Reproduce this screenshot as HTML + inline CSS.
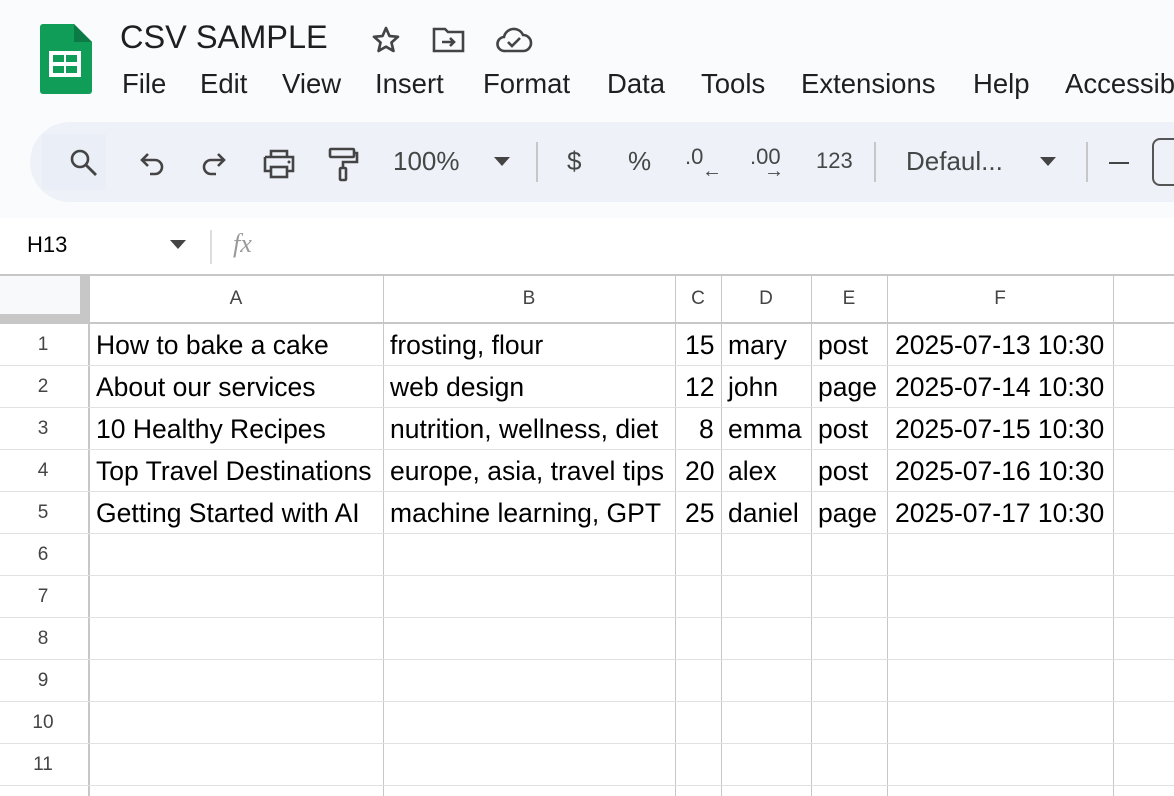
<!DOCTYPE html>
<html><head><style>
*{margin:0;padding:0;box-sizing:border-box}
body{width:1174px;height:796px;overflow:hidden;background:#fff;font-family:"Liberation Sans",Arial,sans-serif;position:relative}
.top{position:absolute;left:0;top:0;width:1174px;height:218px;background:#f9fbfd}
.abs{position:absolute}
.title{left:120px;top:19px;font-size:32.5px;color:#1f1f1f}
.menu{top:68px;font-size:27.5px;color:#1f1f1f}
.tb{left:30px;top:122px;width:1200px;height:80px;border-radius:40px;background:#eef2f8}
.ti{font-size:26px;color:#444746;top:146px}
.sep{width:2px;background:#c7c7c7;top:142px;height:40px}
.hl{position:absolute;background:#e1e1e1;height:1px}
.vl{position:absolute;background:#e1e1e1;width:1px}
.cell{position:absolute;font-size:26.5px;color:#000;white-space:nowrap}
.rn{position:absolute;width:86px;text-align:center;font-size:19px;color:#444}
.ch{position:absolute;text-align:center;font-size:19px;color:#444;top:288px}
</style></head><body>
<div class="top"></div>
<svg class="abs" style="left:40px;top:24px" width="52" height="70" viewBox="0 0 52 70"><path d="M3 0h31l18 18v49a3 3 0 0 1-3 3H3a3 3 0 0 1-3-3V3a3 3 0 0 1 3-3z" fill="#0f9d58"/><path d="M34 0v18h18z" fill="#0b7a44"/><rect x="9" y="27" width="32" height="26" fill="#fff"/><rect x="13" y="31" width="11" height="7" fill="#0f9d58"/><rect x="26" y="31" width="11" height="7" fill="#0f9d58"/><rect x="13" y="42" width="11" height="7" fill="#0f9d58"/><rect x="26" y="42" width="11" height="7" fill="#0f9d58"/></svg>
<div class="abs title">CSV SAMPLE</div>
<svg class="abs" style="left:370px;top:24px" width="32" height="32" viewBox="0 0 24 24"><path d="M12 3l2.6 6 6.4.6-4.9 4.3 1.5 6.3L12 17l-5.6 3.2 1.5-6.3L3 9.6 9.4 9z" fill="none" stroke="#444" stroke-width="2" stroke-linejoin="round"/></svg>
<svg class="abs" style="left:432px;top:26px" width="34" height="28" viewBox="0 0 34 28"><path d="M2 3h11l3 3h15v19H2z" fill="none" stroke="#444" stroke-width="2.6"/><path d="M10 16h12m-4-4l4 4-4 4" fill="none" stroke="#444" stroke-width="2.6"/></svg>
<svg class="abs" style="left:495px;top:26px" width="38" height="28" viewBox="0 0 38 28"><path d="M10 25a7 7 0 0 1-1-14A10 10 0 0 1 28 9a8 8 0 0 1 0 16z" fill="none" stroke="#444" stroke-width="2.6"/><path d="M13 16l4 4 8-8" fill="none" stroke="#444" stroke-width="2.6"/></svg>
<div class="abs menu" style="left:122px">File</div>
<div class="abs menu" style="left:200px">Edit</div>
<div class="abs menu" style="left:282px">View</div>
<div class="abs menu" style="left:375px">Insert</div>
<div class="abs menu" style="left:483px">Format</div>
<div class="abs menu" style="left:607px">Data</div>
<div class="abs menu" style="left:701px">Tools</div>
<div class="abs menu" style="left:801px">Extensions</div>
<div class="abs menu" style="left:973px">Help</div>
<div class="abs menu" style="left:1065px">Accessibility</div>
<div class="abs tb"></div>
<div class="abs" style="left:42px;top:134px;width:64px;height:56px;background:#e9eef7"></div>
<svg class="abs" style="left:68px;top:147px" width="32" height="32" viewBox="0 0 32 32"><circle cx="12" cy="12" r="8" fill="none" stroke="#444" stroke-width="2.6"/><path d="M18 18l10 10" stroke="#444" stroke-width="2.8"/></svg>
<svg class="abs" style="left:138px;top:150px" width="28" height="28" viewBox="0 0 28 28"><path d="M10 4L4 10l6 6M4 10h13a7 7 0 0 1 0 14h-5" fill="none" stroke="#444" stroke-width="2.6"/></svg>
<svg class="abs" style="left:200px;top:150px" width="28" height="28" viewBox="0 0 28 28"><path d="M18 4l6 6-6 6M24 10H11a7 7 0 0 0 0 14h5" fill="none" stroke="#444" stroke-width="2.6"/></svg>
<svg class="abs" style="left:262px;top:148px" width="34" height="32" viewBox="0 0 34 32"><path d="M9 9V3h16v6M3 9h28v14h-6M9 23H3V9" fill="none" stroke="#444" stroke-width="2.6"/><rect x="9" y="19" width="16" height="10" fill="none" stroke="#444" stroke-width="2.6"/><circle cx="27" cy="14" r="1.5" fill="#444"/></svg>
<svg class="abs" style="left:326px;top:146px" width="34" height="36" viewBox="0 0 34 36"><rect x="4" y="3" width="24" height="8" rx="1" fill="none" stroke="#444" stroke-width="2.6"/><path d="M28 7h3v9H17v6" fill="none" stroke="#444" stroke-width="2.6"/><rect x="14" y="22" width="6" height="12" rx="1" fill="none" stroke="#444" stroke-width="2.6"/></svg>
<div class="abs ti" style="left:393px">100%</div>
<svg class="abs" style="left:494px;top:157px" width="16" height="10"><path d="M0 0h16L8 9z" fill="#444"/></svg>
<div class="abs sep" style="left:536px"></div>
<div class="abs ti" style="left:567px">$</div>
<div class="abs ti" style="left:628px">%</div>
<div class="abs ti" style="left:685px;font-size:22px;top:144px">.0</div>
<div class="abs" style="left:702px;top:160px;font-size:20px;color:#444">←</div>
<div class="abs ti" style="left:750px;font-size:22px;top:144px">.00</div>
<div class="abs" style="left:764px;top:160px;font-size:20px;color:#444">→</div>
<div class="abs ti" style="left:816px;font-size:22px;top:148px">123</div>
<div class="abs sep" style="left:874px"></div>
<div class="abs ti" style="left:906px">Defaul...</div>
<svg class="abs" style="left:1040px;top:157px" width="16" height="10"><path d="M0 0h16L8 9z" fill="#444"/></svg>
<div class="abs sep" style="left:1086px"></div>
<div class="abs" style="left:1109px;top:162px;width:20px;height:2px;background:#444"></div>
<div class="abs" style="left:1152px;top:138px;width:40px;height:48px;border:2px solid #555;border-radius:8px"></div>
<div class="abs" style="left:27px;top:232px;font-size:22px;color:#000">H13</div>
<svg class="abs" style="left:170px;top:240px" width="16" height="10"><path d="M0 0h16L8 9z" fill="#444"/></svg>
<div class="abs" style="left:210px;top:230px;width:2px;height:34px;background:#ddd"></div>
<div class="abs" style="left:233px;top:229px;font-size:26px;color:#999;font-style:italic;font-family:'Liberation Serif',serif">fx</div>
<div class="abs" style="left:0;top:274px;width:1174px;height:2px;background:#c7c7c7"></div>
<div class="abs" style="left:0;top:276px;width:89px;height:47px;background:#f8f9fa"></div>
<div class="abs" style="left:80px;top:276px;width:9px;height:47px;background:#c7c7c7"></div>
<div class="abs" style="left:0;top:314px;width:89px;height:9px;background:#c7c7c7"></div>
<div class="abs" style="left:0;top:322px;width:1174px;height:2px;background:#c7c7c7"></div>
<div class="abs" style="left:88px;top:276px;width:2px;height:520px;background:#c7c7c7"></div>
<div class="vl" style="left:383px;top:276px;height:520px;background:#c7c7c7"></div>
<div class="vl" style="left:675px;top:276px;height:520px;background:#c7c7c7"></div>
<div class="vl" style="left:721px;top:276px;height:520px;background:#c7c7c7"></div>
<div class="vl" style="left:811px;top:276px;height:520px;background:#c7c7c7"></div>
<div class="vl" style="left:887px;top:276px;height:520px;background:#c7c7c7"></div>
<div class="vl" style="left:1113px;top:276px;height:520px;background:#c7c7c7"></div>
<div class="ch" style="left:89px;width:294px">A</div>
<div class="ch" style="left:383px;width:292px">B</div>
<div class="ch" style="left:675px;width:46px">C</div>
<div class="ch" style="left:721px;width:90px">D</div>
<div class="ch" style="left:811px;width:76px">E</div>
<div class="ch" style="left:887px;width:226px">F</div>
<div class="hl" style="left:0;top:365px;width:1174px"></div>
<div class="hl" style="left:0;top:407px;width:1174px"></div>
<div class="hl" style="left:0;top:449px;width:1174px"></div>
<div class="hl" style="left:0;top:491px;width:1174px"></div>
<div class="hl" style="left:0;top:533px;width:1174px"></div>
<div class="hl" style="left:0;top:575px;width:1174px"></div>
<div class="hl" style="left:0;top:617px;width:1174px"></div>
<div class="hl" style="left:0;top:659px;width:1174px"></div>
<div class="hl" style="left:0;top:701px;width:1174px"></div>
<div class="hl" style="left:0;top:743px;width:1174px"></div>
<div class="hl" style="left:0;top:785px;width:1174px"></div>
<div class="rn" style="top:334px">1</div>
<div class="rn" style="top:376px">2</div>
<div class="rn" style="top:418px">3</div>
<div class="rn" style="top:460px">4</div>
<div class="rn" style="top:502px">5</div>
<div class="rn" style="top:544px">6</div>
<div class="rn" style="top:586px">7</div>
<div class="rn" style="top:628px">8</div>
<div class="rn" style="top:670px">9</div>
<div class="rn" style="top:712px">10</div>
<div class="rn" style="top:754px">11</div>
<div class="cell" style="left:96px;top:330px">How to bake a cake</div>
<div class="cell" style="left:390px;top:330px">frosting, flour</div>
<div class="cell" style="left:685px;top:330px">15</div>
<div class="cell" style="left:728px;top:330px">mary</div>
<div class="cell" style="left:818px;top:330px">post</div>
<div class="cell" style="left:895px;top:330px">2025-07-13 10:30</div>
<div class="cell" style="left:96px;top:372px">About our services</div>
<div class="cell" style="left:390px;top:372px">web design</div>
<div class="cell" style="left:685px;top:372px">12</div>
<div class="cell" style="left:728px;top:372px">john</div>
<div class="cell" style="left:818px;top:372px">page</div>
<div class="cell" style="left:895px;top:372px">2025-07-14 10:30</div>
<div class="cell" style="left:96px;top:414px">10 Healthy Recipes</div>
<div class="cell" style="left:390px;top:414px">nutrition, wellness, diet</div>
<div class="cell" style="left:699px;top:414px">8</div>
<div class="cell" style="left:728px;top:414px">emma</div>
<div class="cell" style="left:818px;top:414px">post</div>
<div class="cell" style="left:895px;top:414px">2025-07-15 10:30</div>
<div class="cell" style="left:96px;top:456px">Top Travel Destinations</div>
<div class="cell" style="left:390px;top:456px">europe, asia, travel tips</div>
<div class="cell" style="left:685px;top:456px">20</div>
<div class="cell" style="left:728px;top:456px">alex</div>
<div class="cell" style="left:818px;top:456px">post</div>
<div class="cell" style="left:895px;top:456px">2025-07-16 10:30</div>
<div class="cell" style="left:96px;top:498px">Getting Started with AI</div>
<div class="cell" style="left:390px;top:498px">machine learning, GPT</div>
<div class="cell" style="left:685px;top:498px">25</div>
<div class="cell" style="left:728px;top:498px">daniel</div>
<div class="cell" style="left:818px;top:498px">page</div>
<div class="cell" style="left:895px;top:498px">2025-07-17 10:30</div>
</body></html>
